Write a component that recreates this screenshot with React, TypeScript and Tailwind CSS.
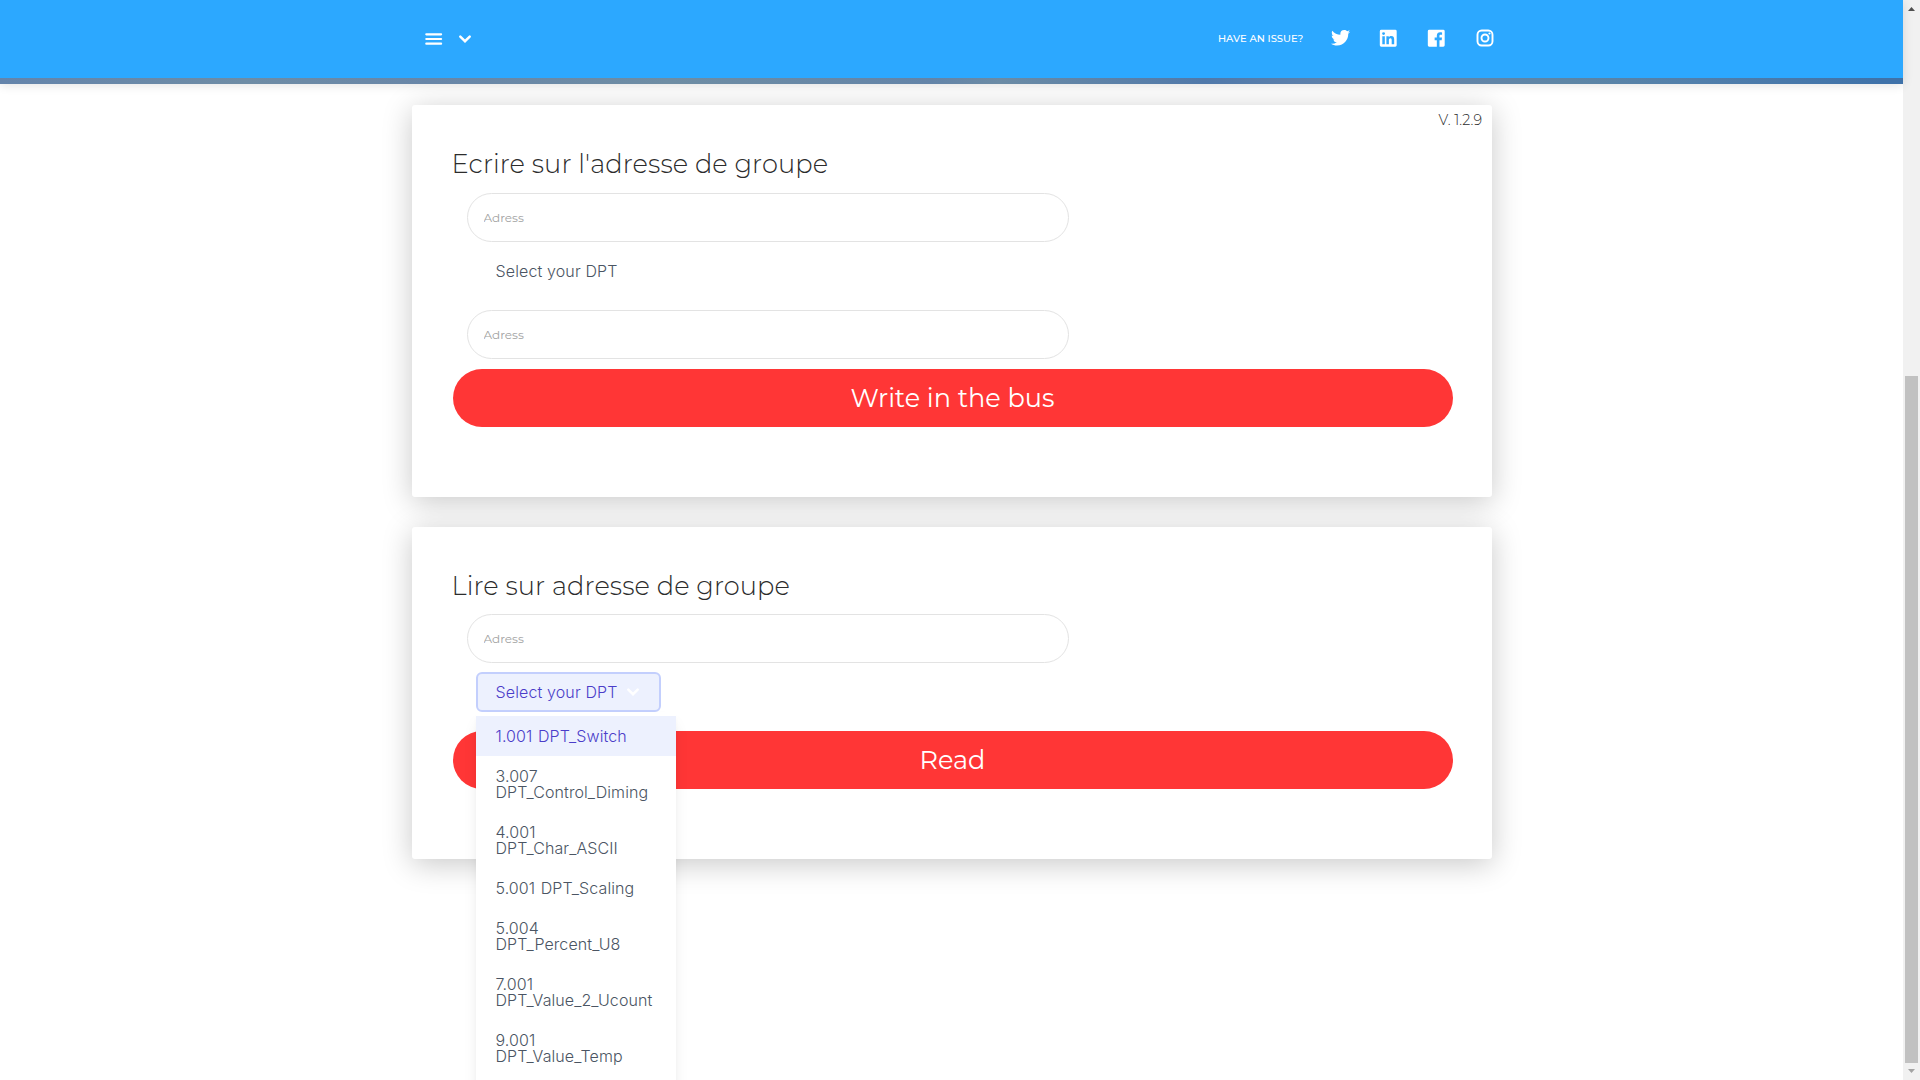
import React from "react";

const options = [
  "1.001 DPT_Switch",
  "3.007 DPT_Control_Diming",
  "4.001 DPT_Char_ASCII",
  "5.001 DPT_Scaling",
  "5.004 DPT_Percent_U8",
  "7.001 DPT_Value_2_Ucount",
  "9.001 DPT_Value_Temp",
];

function Chevron() {
  return (
    <svg className="h-5 w-5" viewBox="0 0 20 20" fill="none" stroke="currentColor" strokeWidth="2.5" strokeLinecap="round">
      <path d="M5.300 7.700L10 12.200L14.700 7.700" />
    </svg>
  );
}

function Social({ d, className }: { d: string; className: string }) {
  return (
    <span className="flex h-6 w-6 items-center justify-center">
      <svg className={className} viewBox="0 0 24 24" fill="currentColor">
        <path fillRule="evenodd" d={d} />
      </svg>
    </span>
  );
}

const twitter =
  "M19.633 7.997c.013.175.013.349.013.523 0 5.325-4.053 11.461-11.46 11.461-2.282 0-4.402-.661-6.186-1.809.324.037.636.05.973.05a8.07 8.07 0 0 0 5.001-1.721 4.036 4.036 0 0 1-3.767-2.793c.249.037.499.062.761.062.361 0 .724-.05 1.061-.137a4.027 4.027 0 0 1-3.23-3.953v-.05c.537.299 1.16.486 1.82.511a4.022 4.022 0 0 1-1.796-3.354c0-.748.199-1.434.548-2.032a11.457 11.457 0 0 0 8.306 4.215c-.062-.3-.1-.611-.1-.923a4.026 4.026 0 0 1 4.028-4.028c1.16 0 2.207.486 2.943 1.272a7.957 7.957 0 0 0 2.556-.973 4.02 4.02 0 0 1-1.771 2.22 8.073 8.073 0 0 0 2.319-.624 8.645 8.645 0 0 1-2.019 2.083z";
const linkedin =
  "M19.500 3H4.500a1.500 1.500 0 0 0-1.500 1.500v15a1.500 1.500 0 0 0 1.500 1.500h15a1.500 1.500 0 0 0 1.500-1.500V4.500a1.500 1.500 0 0 0-1.500-1.500zM8.339 18.337H5.667v-8.59h2.672v8.59zM7.003 8.574a1.548 1.548 0 1 1 0-3.096 1.548 1.548 0 0 1 0 3.096zm11.335 9.763h-2.669V14.16c0-.996-.018-2.277-1.388-2.277-1.39 0-1.601 1.086-1.601 2.207v4.248h-2.667v-8.59h2.56v1.174h.037c.355-.675 1.227-1.387 2.524-1.387 2.704 0 3.203 1.778 3.203 4.092v4.71z";
const facebook =
  "M19.500 3H4.500a1.500 1.500 0 0 0-1.500 1.500v15a1.500 1.500 0 0 0 1.500 1.500h8.115v-6.96h-2.338v-2.725h2.338v-2c0-2.325 1.42-3.592 3.5-3.592.699-.002 1.399.034 2.095.107v2.42h-1.435c-1.128 0-1.348.538-1.348 1.325v1.735h2.697l-.35 2.725h-2.348V21H19.500a1.500 1.500 0 0 0 1.500-1.500V4.500a1.500 1.500 0 0 0-1.500-1.500z";

function Field() {
  return (
    <input
      placeholder="Adress"
      className="ml-[15px] block h-[49px] w-[602px] rounded-[24.5px] border border-[#e3e3e3] bg-transparent px-[15.5px] font-['Montserrat',sans-serif] text-[12px] outline-none placeholder:text-[#a2a2a2]"
    />
  );
}

function Heading({ children }: { children: string }) {
  return (
    <h3 className="-ml-[0.5px] h-[36px] font-['Montserrat',sans-serif] text-[25.7px] leading-[37px] font-[340] tracking-[0.1px] whitespace-nowrap text-[#2c2c2c]">
      {children}
    </h3>
  );
}

function Action({ children, className }: { children: string; className: string }) {
  return (
    <button
      className={
        "ml-px block h-[58px] w-[1000px] rounded-[29px] bg-[#ff3636] pr-px font-['Montserrat',sans-serif] text-[25.55px] leading-[58px] text-white " +
        className
      }
    >
      {children}
    </button>
  );
}

export default function App() {
  return (
    <div className="flex h-[1080px] w-[1920px] overflow-hidden bg-white">
      <div className="flex h-[1080px] w-[1903px] flex-col">
        <header className="relative z-10 h-[84px] shrink-0 bg-[#2ca8ff] shadow-[0_1px_10px_rgba(0,0,0,0.12)]">
          <nav className="mx-auto flex h-[78px] w-[1110px] items-center justify-between pr-[10px] pl-[15px] text-white">
            <div className="flex items-center pl-[13px]">
              <svg className="h-[14px] w-[18px]" viewBox="0 0 18 14" stroke="white" strokeWidth="2.200" strokeLinecap="round">
                <path d="M1.300 2.300h14.800M1.300 7h14.800M1.300 11.700h14.800" />
              </svg>
              <div className="ml-[12.5px]">
                <Chevron />
              </div>
            </div>
            <div className="flex items-center pb-[2px]">
              <span className="mr-[25.5px] w-[85px] font-['Montserrat',sans-serif] text-[10px] font-medium whitespace-nowrap">HAVE AN ISSUE?</span>
              <div className="flex items-center gap-6">
                <Social d={twitter} className="h-[23.5px] w-[23.5px]" />
                <Social d={linkedin} className="h-[22.5px] w-[22.5px]" />
                <Social d={facebook} className="h-[22.5px] w-[22.5px]" />
                <svg className="h-6 w-6" viewBox="0 0 24 24" fill="none" stroke="currentColor">
                  <rect x="4.500" y="4.500" width="15" height="15" rx="4.200" strokeWidth="1.900" />
                  <circle cx="12" cy="12" r="3.500" strokeWidth="1.900" />
                  <circle cx="16.500" cy="7.500" r="1.100" fill="currentColor" stroke="none" />
                </svg>
              </div>
            </div>
          </nav>
          <div className="h-[6px] bg-[linear-gradient(90deg,#6484ab_0px,#6e8ca5_245px,#6886a8_430px,#6e8da4_670px,#6384a8_930px,#6b8ba5_1000px,#5079aa_1205px,#6685aa_1389px,#5d85a5_1572px,#517fab_1695px,#3f72a9_1880px)]" />
        </header>
        <main className="mt-[21px] ml-[412px] w-[1080px]">
          <section className="h-[392px] rounded-[3px] bg-white pl-[40px] shadow-[0_5px_30px_rgba(0,0,0,0.22)]">
            <p className="h-[40px] pt-[5px] pr-[10px] text-right font-['Montserrat',sans-serif] text-[14.2px] leading-[21px] font-[340] tracking-[0.05px] text-[#2c2c2c]">V. 1.2.9</p>
            <Heading>Ecrire sur l'adresse de groupe</Heading>
            <div className="mt-[12px]">
              <Field />
            </div>
            <div className="flex h-[68px] pt-[19px] pl-[43.5px] font-['Inter',sans-serif] text-[16px] leading-[20px] font-[340] tracking-[0.13px] text-[#4b5563]">Select your DPT</div>
            <Field />
            <Action className="mt-[10px]">Write in the bus</Action>
          </section>
          <section className="mt-[30px] h-[332px] rounded-[3px] bg-white pt-[40px] pl-[40px] shadow-[0_5px_30px_rgba(0,0,0,0.22)]">
            <Heading>Lire sur adresse de groupe</Heading>
            <div className="mt-[11px]">
              <Field />
            </div>
            <div className="relative mt-[9px] ml-[24px] h-[40px] w-[185px] font-['Inter',sans-serif] text-[16px] leading-[16px] font-[340]">
              <button className="flex h-10 w-[185px] items-center rounded-[6px] border-2 border-[#c3cffd] bg-[#edf1fe] pl-[17.500px] text-[#4b3dc9]">
                <span className="w-[122px] text-left tracking-[0.13px] whitespace-nowrap">Select your DPT</span>
                <span className="ml-[5.5px] text-white">
                  <Chevron />
                </span>
              </button>
              <ul className="absolute top-10 left-0 w-[200px] bg-white pt-1 pb-4 tracking-[0.09px] [word-spacing:1px] text-[#4b5563] shadow-[0_10px_15px_-3px_rgba(0,0,0,0.1),0_4px_6px_-2px_rgba(0,0,0,0.05)]">
                {options.map((o, i) => (
                  <li key={o} className={i === 0 ? "bg-[#edf1fe] px-[19.500px] py-3 text-[#4b3dc9]" : "px-[19.500px] py-3"}>
                    {o}
                  </li>
                ))}
              </ul>
            </div>
            <Action className="mt-[19px]">Read</Action>
          </section>
        </main>
      </div>
      <aside className="flex h-[1080px] w-[17px] flex-col items-center bg-[#f1f1f1]">
        <svg className="h-[17px] w-[17px] shrink-0" viewBox="0 0 17 17">
          <path d="M5 11h7L8.500 7z" fill="#505050" />
        </svg>
        <div className="mt-[359px] h-[687px] w-[13px] bg-[#c1c1c1]" />
        <svg className="h-[17px] w-[17px] shrink-0" viewBox="0 0 17 17">
          <path d="M5 6h7L8.500 10z" fill="#a3a3a3" />
        </svg>
      </aside>
    </div>
  );
}
